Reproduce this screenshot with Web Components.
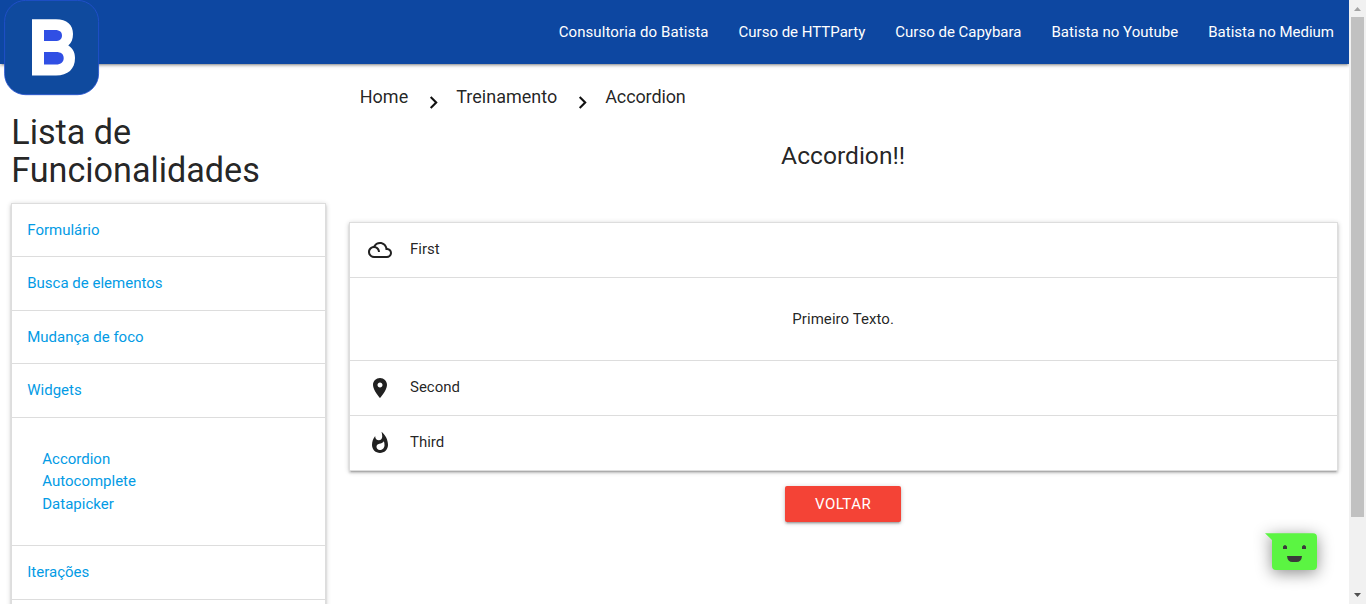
<!DOCTYPE html>
<html lang="pt-BR">
<head>
<meta charset="utf-8">
<title>Accordion</title>
<style>
html{font-size:15px}
body{margin:0;height:604px;overflow:hidden;font:400 15px/1.5 Roboto,sans-serif;color:rgba(0,0,0,.87);background:#fff}
</style>
</head>
<body>
<training-page></training-page>
<script>
const define = (name, html) => {
  const template = document.createElement('template');
  template.innerHTML = html;
  customElements.define(name, class extends HTMLElement {
    constructor() {
      super();
      this.attachShadow({ mode: 'open' }).append(template.content.cloneNode(true));
    }
  });
};

define('brand-logo', `
<style>:host{display:block;width:96px;height:96px}svg{display:block}</style>
<svg width="96" height="96" viewBox="0 0 96 96">
  <rect x=".6" y=".4" width="94" height="94.300" rx="21" fill="#0f4a9e" stroke="#2450d2" stroke-width=".8"/>
  <path fill="#fff" d="M28 19.300H52C63 19.300 69 25 69 34C69 39 67.500 43 64.300 45.500C68.500 48 71 52 71 58C71 69 64 75.500 52 75.500H28Z"/>
  <path fill="#304fe4" d="M40 30H51C56 30 58 32.300 58 35.500C58 39 56 41 51 41H40ZM40 52H52C57 52 59.700 54 59.700 58C59.700 62 57 64.500 52 64.500H40Z"/>
</svg>`);

define('nav-link', `
<style>:host{display:block;padding:0 15px;font-size:15px;line-height:64px;color:#fff;white-space:nowrap}</style><slot></slot>`);

define('top-nav', `
<style>
:host{display:flex;justify-content:space-between;height:64px;background:#0d47a1;box-shadow:0 2px 2px 0 rgba(0,0,0,.14),0 3px 1px -2px rgba(0,0,0,.12),0 1px 5px 0 rgba(0,0,0,.2)}
brand-logo{margin-left:4px}
nav{display:flex}
::slotted(:first-child){letter-spacing:.095px}
::slotted(:nth-child(4)){letter-spacing:.04px}
</style>
<brand-logo></brand-logo><nav><slot></slot></nav>`);

define('card-list', `
<style>:host{display:block;border:1px solid #ddd;border-bottom:0;box-shadow:0 2px 2px 0 rgba(0,0,0,.14),0 3px 1px -2px rgba(0,0,0,.12),0 1px 5px 0 rgba(0,0,0,.2)}</style><slot></slot>`);

define('card-header', `
<style>
:host{display:flex;min-height:22.5px;padding:15px;border-bottom:1px solid #ddd;background:#fff;line-height:22.5px}
::slotted(svg){width:24px;height:24px;padding:0 3px;margin-right:15.500px;fill:#212121;flex:none}
</style><slot></slot>`);

define('card-body', `
<style>:host{display:block;padding:30px;border-bottom:1px solid #ddd}</style><slot></slot>`);

define('side-menu', `
<style>
:host{display:block}
h4{margin:0 0 13.5px;font-size:34.2px;line-height:37.62px;font-weight:400;letter-spacing:-.03px}
card-list{color:#039be5}
span{display:block}
</style>
<h4>Lista de Funcionalidades</h4>
<card-list>
  <card-header>Formulário</card-header>
  <card-header>Busca de elementos</card-header>
  <card-header>Mudança de foco</card-header>
  <card-header>Widgets</card-header>
  <card-body><span>Accordion</span><span>Autocomplete</span><span>Datapicker</span></card-body>
  <card-header>Iterações</card-header>
  <card-header></card-header>
</card-list>`);

define('bread-crumbs', `
<style>
:host{display:flex;height:44px;padding-left:11.25px;font-size:18px;line-height:44px}
svg{width:25px;height:25px;margin:15px 10px 0 13px;fill:#111}
span:first-child,span:nth-of-type(1){width:48.500px}
span:nth-of-type(2){width:101px}
span:nth-of-type(3){letter-spacing:-.12px}
</style>
<span>Home</span>
<svg viewBox="0 0 24 24"><path d="M10 6 8.590 7.410 13.170 12l-4.580 4.590L10 18l6-6z"/></svg>
<span>Treinamento</span>
<svg viewBox="0 0 24 24"><path d="M10 6 8.590 7.410 13.170 12l-4.580 4.590L10 18l6-6z"/></svg>
<span>Accordion</span>`);

define('back-button', `
<style>:host{display:block;box-sizing:border-box;width:116px;height:36px;line-height:36px;text-align:center;font-size:15px;letter-spacing:.5px;color:#fff;background:#f44336;border-radius:2px;box-shadow:0 2px 2px 0 rgba(0,0,0,.14),0 3px 1px -2px rgba(0,0,0,.12),0 1px 5px 0 rgba(0,0,0,.2)}</style><slot></slot>`);

define('main-panel', `
<style>
:host{display:block}
h5{margin:23px 0 52.8px;font-size:24.6px;line-height:27.06px;font-weight:400;text-align:center}
card-body{text-align:center;letter-spacing:.06px}
back-button{margin:15px auto 0}
</style>
<bread-crumbs></bread-crumbs>
<h5>Accordion!!</h5>
<card-list>
  <card-header><svg viewBox="0 0 24 24"><path d="M19.350 10.040C18.670 6.590 15.640 4 12 4 9.110 4 6.600 5.640 5.350 8.040 2.340 8.360 0 10.910 0 14c0 3.310 2.690 6 6 6h13c2.760 0 5-2.240 5-5 0-2.640-2.050-4.780-4.650-4.960zM19 18H6c-2.210 0-4-1.790-4-4s1.790-4 4-4 4 1.790 4 4h2c0-2.760-1.860-5.080-4.400-5.780C8.610 6.880 10.200 6 12 6c3.030 0 5.500 2.470 5.500 5.500v.5H19c1.650 0 3 1.350 3 3s-1.350 3-3 3z"/></svg>First</card-header>
  <card-body>Primeiro Texto.</card-body>
  <card-header><svg viewBox="0 0 24 24"><path d="M12 2C8.130 2 5 5.130 5 9c0 5.250 7 13 7 13s7-7.750 7-13c0-3.870-3.130-7-7-7zm0 9.500c-1.380 0-2.500-1.120-2.500-2.500s1.120-2.500 2.500-2.500 2.500 1.120 2.500 2.500-1.120 2.500-2.500 2.500z"/></svg>Second</card-header>
  <card-header><svg viewBox="0 0 24 24"><path d="M13.500.67s.74 2.650.74 4.800c0 2.060-1.350 3.730-3.410 3.730-2.070 0-3.630-1.670-3.630-3.730l.03-.36C5.210 7.510 4 10.620 4 14c0 4.420 3.580 8 8 8s8-3.580 8-8C20 8.610 17.410 3.800 13.500.67zM11.710 19c-1.780 0-3.220-1.400-3.220-3.140 0-1.620 1.050-2.760 2.810-3.120 1.770-.36 3.600-1.210 4.620-2.580.39 1.290.59 2.650.59 4.040 0 2.650-2.150 4.800-4.800 4.800z"/></svg>Third</card-header>
</card-list>
<back-button>VOLTAR</back-button>`);

define('chat-bubble', `
<style>:host{display:block;width:52px;height:38px}svg{display:block;overflow:visible;filter:drop-shadow(0 3px 8px rgba(0,0,0,.45))}</style>
<svg width="52" height="38" viewBox="0 0 52 38">
  <path fill="#5bf542" d="M0 .2H48Q52 .2 52 4.200V33Q52 37 48 37H11Q7 37 7 33V7Z"/>
  <path fill="#3a3a3a" d="M18 16V13.500Q20 10.500 22 13.500V16ZM37 16V13.500Q39 10.500 41 13.500V16ZM22 23H37Q36.500 29 31.500 29H27.500Q22.500 29 22 23Z"/>
</svg>`);

define('page-scrollbar', `
<style>
:host{display:flex;flex-direction:column;align-items:center;height:604px;background:#f1f1f1}
svg{display:block;width:17px;height:17px;flex:none}
div{width:13px;height:500px;background:#c1c1c1}
i{flex:1}
</style>
<svg viewBox="0 0 17 17"><path fill="#a3a3a3" d="M5 11 8.500 7 12 11Z"/></svg><div></div><i></i>
<svg viewBox="0 0 17 17"><path fill="#505050" d="M5 6 8.500 10 12 6Z"/></svg>`);

define('training-page', `
<style>
:host{display:grid;grid-template-columns:1349px 17px;height:604px;overflow:hidden;position:relative}
.page{height:604px;overflow:hidden}
.row{display:grid;grid-template-columns:337.25px 1fr}
side-menu{padding:50px 11.25px 0}
main-panel{padding:11px 11.25px 0}
chat-bubble{position:absolute;left:1265px;top:533px}
</style>
<div class="page">
  <top-nav>
    <nav-link>Consultoria do Batista</nav-link><nav-link>Curso de HTTParty</nav-link><nav-link>Curso de Capybara</nav-link><nav-link>Batista no Youtube</nav-link><nav-link>Batista no Medium</nav-link>
  </top-nav>
  <div class="row"><side-menu></side-menu><main-panel></main-panel></div>
</div>
<page-scrollbar></page-scrollbar>
<chat-bubble></chat-bubble>`);
</script>
</body>
</html>
